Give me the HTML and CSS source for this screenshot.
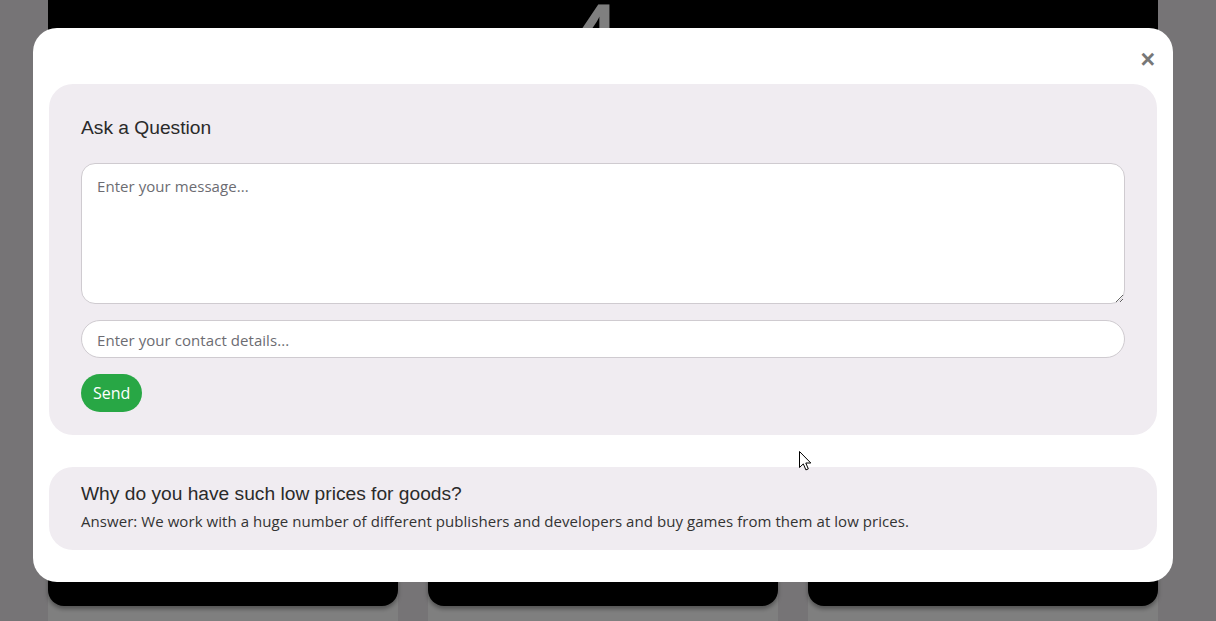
FILE: index.html
```html
<!DOCTYPE html>
<html lang="en">
<head>
<meta charset="utf-8">
<title>Ask a Question</title>
<link rel="stylesheet" href="styles.css">
</head>
<body>
<div class="page">
  <div class="container">
    <div class="hero"><span class="hero-num">4</span></div>
    <div class="cards">
      <div class="card"><div class="card-img"></div><div class="card-body"></div></div>
      <div class="card"><div class="card-img"></div><div class="card-body"></div></div>
      <div class="card"><div class="card-img"></div><div class="card-body"></div></div>
    </div>
  </div>
</div>

<div class="overlay">
  <div class="modal">
    <div class="modal-header">
      <button class="close" type="button" aria-label="Close">&times;</button>
    </div>
    <div class="modal-body">
      <section class="panel ask">
        <h5 class="ask-title">Ask a Question</h5>
        <textarea class="field area" placeholder="Enter your message..."></textarea>
        <input class="field line" type="text" placeholder="Enter your contact details...">
        <div><button class="send" type="button">Send</button></div>
      </section>
      <section class="panel faq">
        <div class="faq-q">Why do you have such low prices for goods?</div>
        <div class="faq-a">Answer: We work with a huge number of different publishers and developers and buy games from them at low prices.</div>
      </section>
    </div>
  </div>
</div>

<svg class="cursor" width="13" height="21" viewBox="0 0 13 21" aria-hidden="true">
  <path d="M0.5 0.5 L0.5 16.5 L4.3 12.9 L6.9 18.9 L9.3 17.9 L6.8 12 L11.8 12 Z" fill="#fff" stroke="#000" stroke-width="1" stroke-linejoin="round"/>
</svg>
</body>
</html>
```

FILE: styles.css
```css
html, body {
  margin: 0;
  padding: 0;
  height: 100%;
  overflow: hidden;
}
body {
  background: #ece8ec;
  font-family: "Open Sans", "Noto Sans", sans-serif;
}
.page {
  padding-right: 10px;
}
.container {
  width: 1110px;
  margin: 0 auto;
}
.hero {
  height: 330px;
  background: #000;
  display: flex;
  justify-content: center;
  overflow: hidden;
}
.hero-num {
  font-family: "Liberation Sans", Arial, sans-serif;
  font-size: 120px;
  line-height: 1;
  color: #fff;
  margin-top: -14px;
  margin-left: -24px;
}
.cards {
  display: flex;
  gap: 30px;
  margin-top: 20px;
}
.card {
  width: 350px;
  background: #fff;
  height: 400px;
}
.card-img {
  height: 256px;
  background: #000;
  border-radius: 0 0 16px 16px;
  box-shadow: 0 3px 4px rgba(0,0,0,0.35);
}
.overlay {
  position: fixed;
  inset: 0;
  background: rgba(0, 0, 0, 0.5);
  display: flex;
  justify-content: center;
  align-items: flex-start;
  padding: 28px 10px 0 0;
}
.modal {
  width: 1140px;
  background: #fff;
  border-radius: 24px;
  padding: 0 16px 32px;
  box-sizing: border-box;
}
.modal-header {
  height: 56px;
  display: flex;
  justify-content: flex-end;
  align-items: flex-start;
}
.close {
  border: 0;
  background: none;
  color: #777;
  font-family: "Liberation Sans", Arial, sans-serif;
  font-size: 25px;
  line-height: 1;
  padding: 0;
  margin: 19px 2px 0 0;
  cursor: pointer;
  font-weight: 700;
}
.modal-body {
  display: flex;
  flex-direction: column;
  gap: 32px;
}
.panel {
  background: #f0ecf1;
  border-radius: 24px;
  padding: 0 32px;
}
.ask {
  padding-top: 32px;
  padding-bottom: 23px;
  display: flex;
  flex-direction: column;
  gap: 16px;
}
.ask-title {
  margin: 0 0 7px;
  font-family: "Liberation Sans", Arial, sans-serif;
  font-size: 19.2px;
  font-weight: 400;
  line-height: 24px;
  color: #2a2a2a;
}
.field {
  display: block;
  width: 100%;
  box-sizing: border-box;
  border: 1px solid #cfcbd0;
  background: #fff;
  font-family: "Open Sans", "Noto Sans", sans-serif;
  font-size: 15px;
  letter-spacing: 0.06px;
  color: #333;
  padding: 0 15px;
  margin: 0;
  outline: none;
}
.field::placeholder {
  color: #6c6c72;
}
.area {
  height: 141px;
  border-radius: 14px;
  padding-top: 12px;
  resize: vertical;
}
.line {
  height: 38px;
  border-radius: 19px;
  padding-top: 2px;
}
.send {
  height: 38px;
  border: 0;
  border-radius: 19px;
  background: #28a745;
  color: #fff;
  font-family: "Open Sans", "Noto Sans", sans-serif;
  font-size: 16px;
  font-weight: 500;
  padding: 0 12px;
  cursor: pointer;
}
.faq {
  padding-top: 16px;
  padding-bottom: 18px;
}
.faq-q {
  font-family: "Liberation Sans", Arial, sans-serif;
  font-size: 19.2px;
  line-height: 22px;
  color: #2a2a2a;
  margin-bottom: 5px;
}
.faq-a {
  font-size: 15px;
  letter-spacing: 0.06px;
  line-height: 22px;
  color: #333;
}
.cursor {
  position: fixed;
  left: 799px;
  top: 451px;
}
```
